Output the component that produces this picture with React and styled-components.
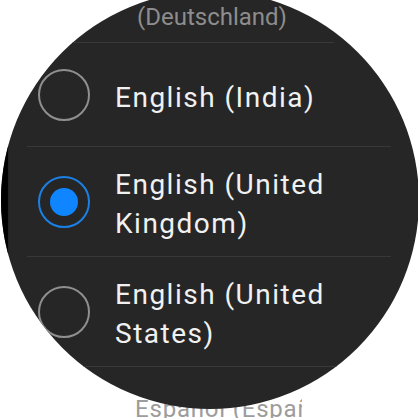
import React from 'react'
import styled, { createGlobalStyle } from 'styled-components'

const GlobalStyle = createGlobalStyle`
    * {
        box-sizing: border-box;
    }

    body {
        margin: 0;
        background: #ffffff;
        font-family: Roboto, "Noto Sans", "Liberation Sans", sans-serif;
    }
`;

const Stage = styled.div`
    width: 418px;
    height: 418px;
    overflow: hidden;
    display: grid;
    background: #ffffff;
`;

// next item of the list, peeking out below the round screen
const Peek = styled.div`
    grid-area: 1 / 1;
    align-self: end;
    width: 302px;
    margin-bottom: -3px;
    padding-left: 135px;
    overflow: hidden;
    font-size: 24px;
    line-height: 24px;
    letter-spacing: 0.8px;
    color: #9c9c9c;
    white-space: nowrap;
`;

const Watch = styled.div`
    grid-area: 1 / 1;
    position: relative;
    z-index: 1;
    width: 418px;
    height: 418px;
    margin: -9px 0 0 1px;
    border-radius: 50%;
    overflow: hidden;
    background: #262626;
    box-shadow: inset 421px 0 1px -414px #000000;
`;

const List = styled.div`
    display: flex;
    flex-direction: column;
    /* scroll position */
    margin-top: -19px;
`;

const EdgeItem = styled.div`
    margin: 0 85px 0 66px;
    padding: 0 0 10px 70px;
    border-bottom: 1px solid #383838;
    font-size: 24px;
    line-height: 30px;
    color: #8d8d8d;
`;

const Row = styled.div`
    display: flex;
    align-items: center;
    gap: 25px;
    min-height: 104px;
    margin: 0 28px 0 26px;
    padding: 13px 0 13px 11px;
    border-bottom: 1px solid #383838;
`;

const Radio = styled.div`
    flex: none;
    width: 52px;
    height: 52px;
    border-radius: 50%;
    border: 2px solid ${p => (p.checked ? '#1b80e4' : '#8f8f8f')};
    display: flex;
    align-items: center;
    justify-content: center;

    &::after {
        content: '';
        display: ${p => (p.checked ? 'block' : 'none')};
        width: 28px;
        height: 28px;
        border-radius: 50%;
        background: #0f86ff;
    }
`;

const Label = styled.div`
    padding-top: 5px;
    font-size: 28px;
    line-height: 39px;
    letter-spacing: 1.5px;
    color: #f1f1f1;
    white-space: nowrap;
`;

const languages = [
    { id: 'en-IN', lines: ['English (India)'] },
    { id: 'en-GB', lines: ['English (United', 'Kingdom)'], checked: true },
    { id: 'en-US', lines: ['English (United', 'States)'] },
];

export default function App() {
    return (
        <Stage>
            <GlobalStyle />
            <Peek>Español (España)</Peek>
            <Watch>
                <List>
                    <EdgeItem>
                        Deutsch
                        <br />
                        (Deutschland)
                    </EdgeItem>
                    {languages.map(lang => (
                        <Row key={lang.id}>
                            <Radio checked={lang.checked} />
                            <Label>
                                {lang.lines.map((line, i) => (
                                    <div key={i}>{line}</div>
                                ))}
                            </Label>
                        </Row>
                    ))}
                </List>
            </Watch>
        </Stage>
    )
}
